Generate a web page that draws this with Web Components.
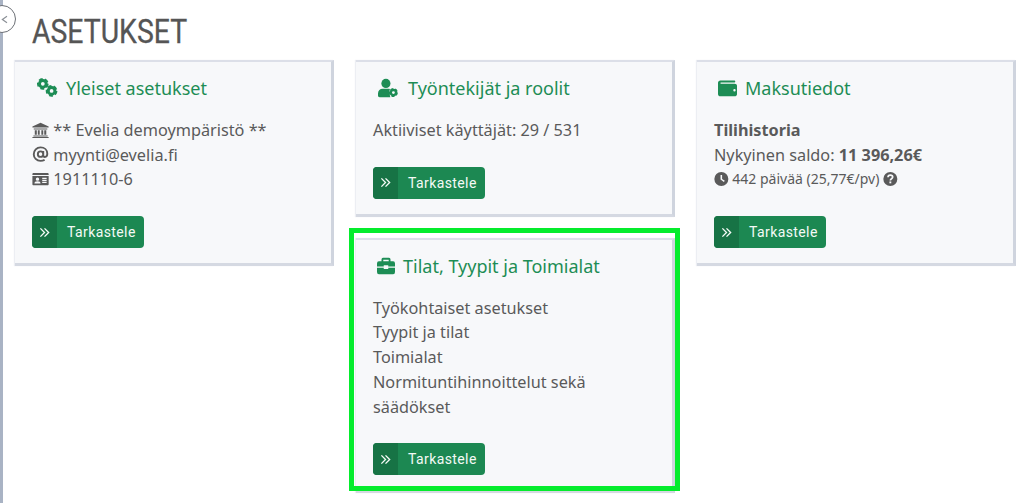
<!DOCTYPE html>
<html lang="fi">
<head>
<meta charset="utf-8">
<title>Asetukset</title>
<style>
  html, body { margin: 0; background: #fff; overflow: hidden; }
  body { font-family: "Noto Sans", "Open Sans", sans-serif; color: #555; }
</style>
</head>
<body>
<settings-page heading="ASETUKSET">
  <settings-card slot="col1" heading="Yleiset asetukset" icon="cogs" icon-w="22" indent="4" icon-gap="8">
    <div><fa-icon name="university"></fa-icon> ** Evelia demoympäristö **</div>
    <div><fa-icon name="at"></fa-icon> myynti@evelia.fi</div>
    <div><fa-icon name="idcard"></fa-icon> 1911110-6</div>
  </settings-card>
  <settings-card slot="col2" heading="Työntekijät ja roolit" icon="usercog" icon-w="22" indent="4" icon-gap="9">
    <div>Aktiiviset käyttäjät: 29 / 531</div>
  </settings-card>
  <settings-card slot="col2" heading="Tilat, Tyypit ja Toimialat" icon="briefcase" icon-w="18" indent="4" icon-gap="8" highlight>
    <div>Työkohtaiset asetukset</div>
    <div>Tyypit ja tilat</div>
    <div>Toimialat</div>
    <div>Normituntihinnoittelut sekä säädökset</div>
  </settings-card>
  <settings-card slot="col3" heading="Maksutiedot" icon="wallet" icon-w="19" indent="4" icon-gap="8">
    <div><b>Tilihistoria</b></div>
    <div>Nykyinen saldo: <b>11 396,26€</b></div>
    <div style="font-size:14px"><fa-icon name="clock"></fa-icon> 442 päivää (25,77€/pv) <fa-icon name="question"></fa-icon></div>
  </settings-card>
</settings-page>

<script>
// icons are hand drawn on a 24x24 box, all use currentColor
const gear = (x, y, r) => `<circle cx="${x}" cy="${y}" r="${r * 0.62}" fill="none" stroke="currentColor" stroke-width="${r * 0.55}"/>
  <circle cx="${x}" cy="${y}" r="${r * 0.92}" fill="none" stroke="currentColor" stroke-width="${r * 0.32}" stroke-dasharray="${r * 0.72} ${r * 0.436}"/>`

const ICONS = {
  cogs: `<svg viewBox="0 0 24 24">${gear(7, 7, 6.5)}${gear(17.5, 15.5, 6.5)}</svg>`,
  usercog: `<svg viewBox="0 0 24 24"><circle cx="9.500" cy="6.500" r="5.500" fill="currentColor"/><path fill="currentColor" d="M0 21v-2.500c0-3.500 2.600-5.500 5.500-5.500h7c.6 0 1.200.1 1.800.3-.8 2.500-.7 6 .5 9.700H2c-1.200 0-2-.8-2-2z"/>${gear(18.500, 17.500, 5)}</svg>`,
  briefcase: `<svg viewBox="0 1 24 23" preserveAspectRatio="none"><path fill="currentColor" d="M8 3h8a2 2 0 0 1 2 2v2h3.500A2.500 2.500 0 0 1 24 9.500V13H15v-1.500H9V13H0V9.500A2.500 2.500 0 0 1 2.500 7H6V5a2 2 0 0 1 2-2zm.4 2.200V7h7.200V5.200zM0 14.500h9V16h6v-1.500h9v5A2.500 2.500 0 0 1 21.500 22h-19A2.500 2.500 0 0 1 0 19.500z"/></svg>`,
  wallet: `<svg viewBox="0 0 24 24"><path fill="currentColor" fill-rule="evenodd" d="M3 2.500h17.500c.8 0 1.300.5 1.300 1.200S21.300 5 20.500 5H3.600C2.900 5 2.900 6.500 3.600 6.500h17.400c1.700 0 3 1.100 3 2.700v10.600c0 1.600-1.300 2.700-3 2.700H3c-1.700 0-3-1.300-3-3V5.500c0-1.700 1.300-3 3-3zm17.800 10.800a1.500 1.500 0 1 0 0 3 1.500 1.500 0 0 0 0-3z"/></svg>`,
  university: `<svg viewBox="0 0 24 24"><path fill="currentColor" d="M12 1 0 6.500V8h24V6.500zM2 9.500h20V11H2zM3.500 12h3v7h-3zM8 12h2.800v7H8zM13.200 12H16v7h-2.800zM17.500 12h3v7h-3zM1.500 20h21v1.500h-21zM0 22h24v1.500H0z"/></svg>`,
  at: `<svg viewBox="0 0 24 24"><path fill="none" stroke="currentColor" stroke-width="2.800" d="M18 20.500c-1.800 1-3.800 1.500-6 1.500C6.200 22 2 17.500 2 12S6.400 2 12 2c5.800 0 10 3.800 10 9.500 0 2.800-1.500 4.700-3.600 4.700-1.500 0-2.400-1-2.400-2.500V7.500M16 12a4 4 0 1 1-8 0 4 4 0 0 1 8 0z"/></svg>`,
  idcard: `<svg viewBox="0 0 24 24"><path fill="currentColor" fill-rule="evenodd" d="M0 4.500C0 3.700.7 3 1.500 3h21c.8 0 1.500.7 1.500 1.500V6H0zM0 7.500h24v12c0 .8-.7 1.500-1.500 1.500h-21C.7 21 0 20.300 0 19.500zM7.500 9.500a2.500 2.500 0 1 0 0 5 2.500 2.500 0 0 0 0-5zM3 18.500h9c0-2-1.500-3.300-4.500-3.300S3 16.500 3 18.500zM14.500 10v1.800H21V10zM14.500 13v1.800H21V13zM14.500 16v1.800H21V16z"/></svg>`,
  clock: `<svg viewBox="0 0 24 24"><path fill="currentColor" fill-rule="evenodd" d="M12 0a12 12 0 1 1 0 24 12 12 0 0 1 0-24zM10.600 5v8l5.800 4.200 1.500-2-4.600-3.400V5z"/></svg>`,
  question: `<svg viewBox="0 0 24 24"><circle cx="12" cy="12" r="12" fill="currentColor"/><path fill="none" stroke="#f7f8fa" stroke-width="3" d="M8 9c0-2.300 1.800-3.600 4-3.600s4 1.300 4 3.300c0 3-4 2.800-4 5.800"/><rect x="10.400" y="16.200" width="3.200" height="3.200" fill="#f7f8fa"/></svg>`,
  chevrons: `<svg viewBox="0 0 24 24"><path fill="none" stroke="currentColor" stroke-width="3" d="M3 3l9 9-9 9M12 3l9 9-9 9"/></svg>`,
  back: `<svg viewBox="0 0 24 24"><path fill="none" stroke="currentColor" stroke-width="3.500" d="M18 2 4 12l14 10"/></svg>`
}

class FaIcon extends HTMLElement {
  static get observedAttributes() { return ['name'] }
  constructor() {
    super()
    this.attachShadow({mode: 'open'})
  }
  attributeChangedCallback() {
    this.render()
  }
  connectedCallback() {
    this.render()
  }
  render() {
    this.shadowRoot.innerHTML = `<style>
      :host { display: inline-block; width: 1.05em; height: 1em; vertical-align: -0.12em; }
      svg { display: block; width: 100%; height: 100%; overflow: visible; }
    </style>${ICONS[this.getAttribute('name')] || ''}`
  }
}
customElements.define('fa-icon', FaIcon)

const buttonTemplate = document.createElement('template')
buttonTemplate.innerHTML = `<style>
  :host { display: inline-flex; height: 32px; width: 112px; border-radius: 4px; overflow: hidden; background: #1c8852; color: #f4faf6; font: 400 14px/32px Roboto, sans-serif; letter-spacing: .4px; }
  .ico { width: 25px; background: #177345; display: flex; align-items: center; justify-content: center; }
  fa-icon { width: 11px; height: 11px; }
  .txt { padding-left: 10px; }
</style>
<span class="ico"><fa-icon name="chevrons"></fa-icon></span><span class="txt"><slot></slot></span>`

class ViewButton extends HTMLElement {
  constructor() {
    super()
    this.attachShadow({mode: 'open'})
    this.shadowRoot.appendChild(buttonTemplate.content.cloneNode(true))
  }
}
customElements.define('view-button', ViewButton)

const cardTemplate = document.createElement('template')
cardTemplate.innerHTML = `<style>
  :host { display: block; position: relative; box-sizing: border-box; background: #f7f8fa; padding: 3px 17px 15px 17px; border-top: 2px solid #dcdfe8; border-right: 3px solid #cfd4de; border-bottom: 3px solid #d5d9e2; box-shadow: -1px 0 1px #eceef3; }
  h2 { margin: 0; display: flex; align-items: center; height: 46px; font: 400 18px/26px "Noto Sans", "Open Sans", sans-serif; color: #1d8d55; }
  .title-icon { height: 20px; }
  .body { margin-top: 7px; font-size: 16.25px; line-height: 24.7px; color: #5a5a5a; }
  view-button { margin-top: 24px; display: flex; }
  .mark { display: none; position: absolute; left: -7px; right: -8px; top: -12px; bottom: -1px; border: 5px solid #05ec2d; pointer-events: none; }
  :host([highlight]) .mark { display: block; }
</style>
<h2><fa-icon class="title-icon"></fa-icon><span class="label"></span></h2>
<div class="body"><slot></slot></div>
<view-button>Tarkastele</view-button>
<div class="mark"></div>`

class SettingsCard extends HTMLElement {
  constructor() {
    super()
    this.attachShadow({mode: 'open'})
    this.shadowRoot.appendChild(cardTemplate.content.cloneNode(true))
  }
  connectedCallback() {
    this.shadowRoot.querySelector('.label').textContent = this.getAttribute('heading')
    const icon = this.shadowRoot.querySelector('.title-icon')
    icon.setAttribute('name', this.getAttribute('icon'))
    icon.style.width = this.getAttribute('icon-w') + 'px'
    icon.style.marginLeft = this.getAttribute('indent') + 'px'
    icon.style.marginRight = this.getAttribute('icon-gap') + 'px'
  }
}
customElements.define('settings-card', SettingsCard)

const pageTemplate = document.createElement('template')
pageTemplate.innerHTML = `<style>
  :host { display: block; position: relative; box-sizing: border-box; height: 503px; border-left: 3px solid #a9b3c4; padding-left: 12px; color: #555; }
  h1 { margin: 0; height: 60px; padding: 14px 0 0 17px; box-sizing: border-box; font: 400 33px/36px Roboto, sans-serif; color: #555; -webkit-text-stroke: .3px #555; }
  h1 span { display: inline-block; transform: scaleX(.86); transform-origin: left center; }
  .grid { display: grid; grid-template-columns: 319px 319px 319px; column-gap: 22px; align-items: start; }
  .col { display: flex; flex-direction: column; gap: 21px; }
  .back { position: absolute; left: -15px; top: 5px; width: 26px; height: 26px; border: 1px solid #6c7076; border-radius: 50%; background: #fff; display: flex; align-items: center; justify-content: center; color: #8a8f96; }
  .back fa-icon { width: 8px; height: 11px; margin-left: 6px; }
</style>
<div class="back"><fa-icon name="back"></fa-icon></div>
<h1><span></span></h1>
<div class="grid">
  <div class="col"><slot name="col1"></slot></div>
  <div class="col"><slot name="col2"></slot></div>
  <div class="col"><slot name="col3"></slot></div>
</div>`

class SettingsPage extends HTMLElement {
  constructor() {
    super()
    this.attachShadow({mode: 'open'})
    this.shadowRoot.appendChild(pageTemplate.content.cloneNode(true))
  }
  connectedCallback() {
    this.shadowRoot.querySelector('h1 span').textContent = this.getAttribute('heading')
  }
}
customElements.define('settings-page', SettingsPage)
</script>
</body>
</html>
